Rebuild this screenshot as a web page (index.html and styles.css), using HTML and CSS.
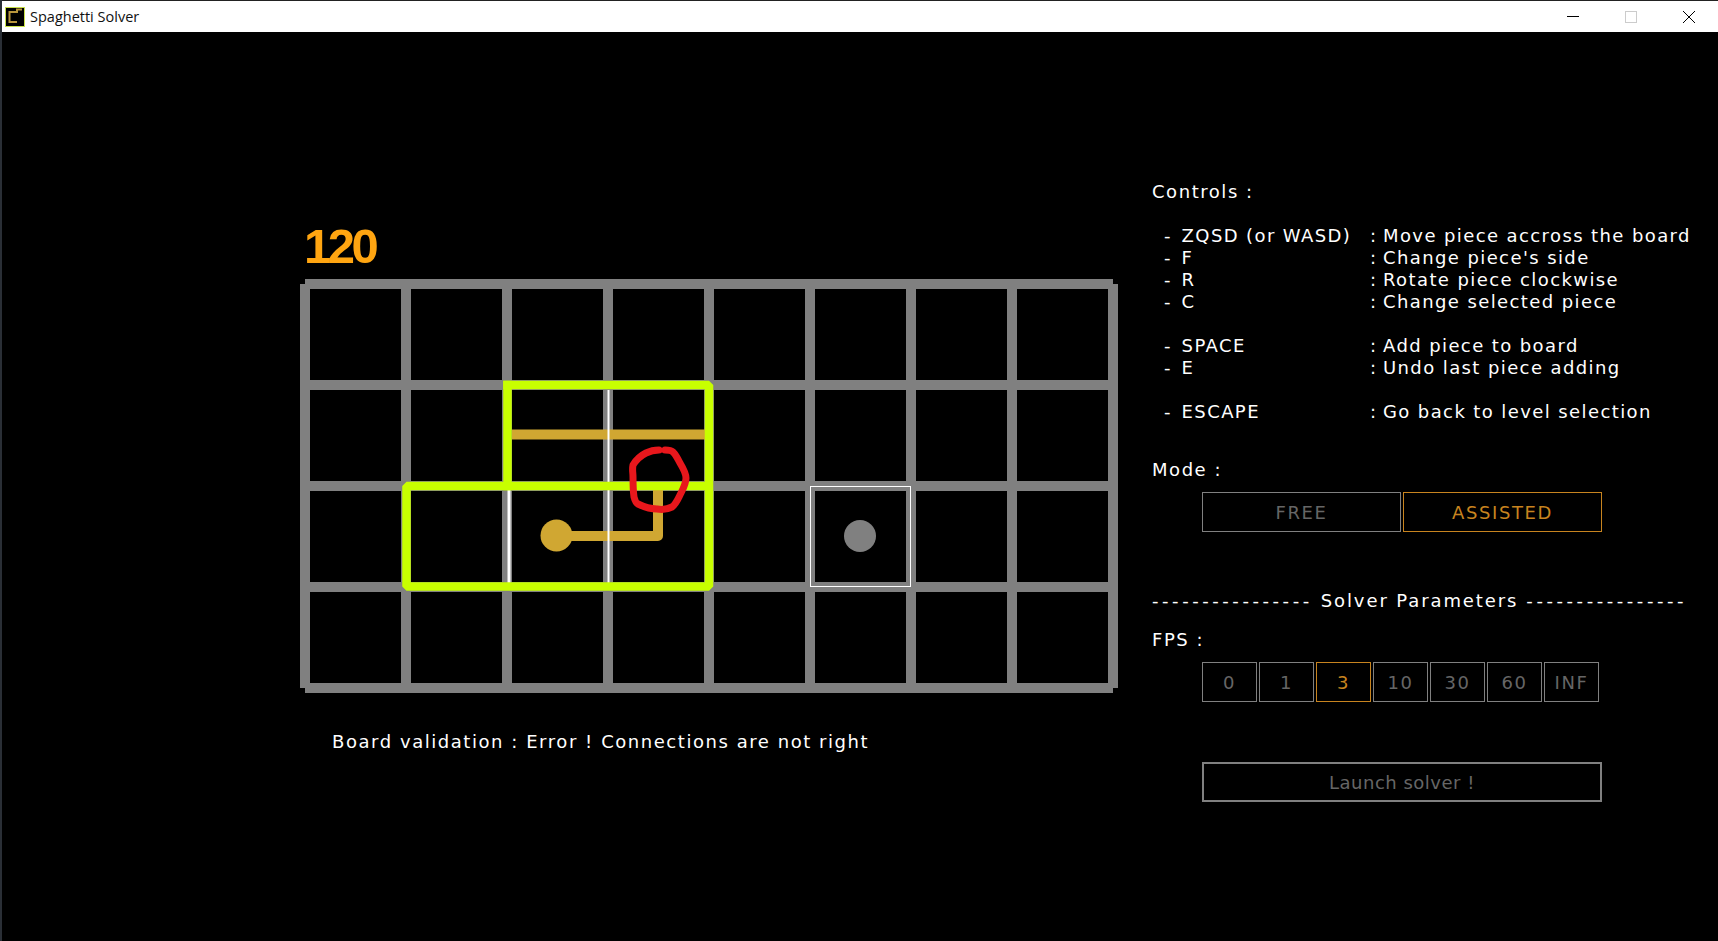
FILE: index.html
```html
<!DOCTYPE html>
<html lang="en">
<head>
    <meta charset="UTF-8">
    <meta name="viewport" content="width=device-width, initial-scale=1.0">
    <title>Spaghetti Solver</title>
    <link rel="stylesheet" href="styles.css">
</head>
<body>
    <header class="titlebar">
        <svg class="app-icon" width="20" height="20" viewBox="0 0 20 20">
            <rect x="0.5" y="0.5" width="19" height="19" fill="#000" stroke="#c8e04a"/>
            <path d="M12 15H4.5V5H12V2.5H17" fill="none" stroke="#b8963c" stroke-width="2"/>
        </svg>
        <span class="app-name">Spaghetti Solver</span>
        <div class="win-buttons">
            <svg width="12" height="12" viewBox="0 0 12 12"><path d="M0 5.5H12" stroke="#000"/></svg>
            <svg width="12" height="12" viewBox="0 0 12 12"><rect x="0.5" y="0.5" width="11" height="11" fill="none" stroke="#ccc"/></svg>
            <svg width="12" height="12" viewBox="0 0 12 12"><path d="M0 0L12 12M12 0L0 12" stroke="#000"/></svg>
        </div>
    </header>

    <main class="game">
        <section class="left">
            <div class="score">120</div>
            <svg class="board" width="818" height="414" viewBox="300 279 818 414">
                <!-- grid -->
                <path class="grid" d="M305 284H1113M305 385H1113M305 486H1113M305 587H1113M305 688H1113"/>
                <path class="grid" d="M305 284V688M406 284V688M507 284V688M608 284V688M709 284V688M810 284V688M911 284V688M1012 284V688M1113 284V688"/>
                <!-- placed piece -->
                <path class="wire" d="M512 434.5H705"/>
                <path class="wire" d="M556 536H658V490"/>
                <circle class="gold-dot" cx="556.5" cy="535.5" r="16"/>
                <path class="seam" d="M509 490V583"/>
                <path class="seam thin" d="M608.5 390V583"/>
                <!-- selection outlines -->
                <path class="outline" d="M507.5 385H709V586.5H406.5V486H709"/>
                <path class="outline" d="M507.5 385V486"/>
                <!-- current piece -->
                <rect class="cursor" x="810.5" y="486.5" width="100" height="100"/>
                <circle class="gray-dot" cx="860" cy="536" r="16"/>
                <!-- hand drawn mark -->
                <path class="mark" d="M659 450C652 450 648 452 646 453C640 456 636 460 633 465C632 470 633 472 633 477C633 484 633 490 634 497C635 501 636 503 638 504C644 507 650 509 657 509C663 510 668 509 672 507C676 504 678 499 680 495C683 489 686 484 686 478C686 473 683 468 680 463C678 459 676 455 673 452C671 450 668 450 665 450"/>
            </svg>
            <p class="validation">Board validation : Error ! Connections are not right</p>
        </section>

        <section class="panel">
            <h2 class="label">Controls :</h2>
            <ul class="controls">
                <li class="spaced"><span>-</span><span>ZQSD (or WASD)</span><span>:</span><span>Move piece accross the board</span></li>
                <li><span>-</span><span>F</span><span>:</span><span>Change piece's side</span></li>
                <li><span>-</span><span>R</span><span>:</span><span>Rotate piece clockwise</span></li>
                <li><span>-</span><span>C</span><span>:</span><span>Change selected piece</span></li>
                <li class="spaced"><span>-</span><span>SPACE</span><span>:</span><span>Add piece to board</span></li>
                <li><span>-</span><span>E</span><span>:</span><span>Undo last piece adding</span></li>
                <li class="spaced"><span>-</span><span>ESCAPE</span><span>:</span><span>Go back to level selection</span></li>
            </ul>

            <h2 class="label mode-label">Mode :</h2>
            <div class="btn-row">
                <button class="btn wide">FREE</button>
                <button class="btn wide on">ASSISTED</button>
            </div>

            <div class="divider"><span class="dashes">----------------</span><span>Solver Parameters</span><span class="dashes">----------------</span></div>

            <h2 class="label fps-label">FPS :</h2>
            <div class="btn-row">
                <button class="btn small">0</button>
                <button class="btn small">1</button>
                <button class="btn small on">3</button>
                <button class="btn small">10</button>
                <button class="btn small">30</button>
                <button class="btn small">60</button>
                <button class="btn small">INF</button>
            </div>

            <button class="btn launch">Launch solver !</button>
        </section>
    </main>
</body>
</html>
```

FILE: styles.css
```css
html, body {
    margin: 0;
    padding: 0;
    height: 100%;
}
body {
    background: #000;
    color: #fff;
    font-family: "DejaVu Sans", sans-serif;
    font-size: 18px;
    line-height: 22px;
    letter-spacing: 1.55px;
    border-left: 2px solid #2a2f36;
    box-sizing: border-box;
    overflow: hidden;
}

.titlebar {
    display: flex;
    align-items: center;
    height: 31px;
    background: #fff;
    border-top: 1px solid #222;
    color: #111;
    padding-left: 3px;
    letter-spacing: 0;
}
.app-name {
    font-family: "Open Sans", sans-serif;
    font-size: 14.5px;
    margin-left: 5px;
}
.win-buttons {
    margin-left: auto;
    display: flex;
    gap: 46px;
    padding-right: 23px;
}

.game {
    display: flex;
    padding-left: 298px;
}
.left {
    width: 818px;
    padding-top: 197px;
}
.score {
    font-family: "Liberation Sans", sans-serif;
    font-size: 49px;
    line-height: 35px;
    font-weight: bold;
    color: #ffa511;
    letter-spacing: -3.5px;
    margin: 0 0 15px 4px;
}
.board {
    display: block;
}
.grid {
    fill: none;
    stroke: #808080;
    stroke-width: 10;
}
.wire {
    fill: none;
    stroke: #d0a732;
    stroke-width: 10;
    stroke-linejoin: round;
}
.gold-dot {
    fill: #d0a732;
}
.seam {
    fill: none;
    stroke: #fff;
    stroke-width: 3;
}
.seam.thin {
    stroke-width: 2;
}
.outline {
    fill: none;
    stroke: #c8ff00;
    stroke-width: 8.5;
    stroke-linejoin: bevel;
    stroke-linecap: square;
}
.cursor {
    fill: none;
    stroke: #fff;
    stroke-width: 1;
}
.gray-dot {
    fill: #808080;
}
.mark {
    fill: none;
    stroke: #e8171c;
    stroke-width: 7;
    stroke-linecap: round;
    stroke-linejoin: round;
}
.validation {
    margin: 38px 0 0 32px;
}

.panel {
    margin-left: 34px;
    padding-top: 149px;
    width: 560px;
}
.label {
    font-size: inherit;
    font-weight: normal;
    margin: 0;
}
.mode-label {
    margin-top: 36px;
}
.fps-label {
    margin-top: 17px;
}
.controls {
    list-style: none;
    margin: 0;
    padding: 0 0 0 12px;
    letter-spacing: 1.4px;
}
.controls li {
    display: grid;
    grid-template-columns: 17.6px 188.4px 13px auto;
    white-space: nowrap;
}
.controls li.spaced {
    margin-top: 22px;
}
.btn-row {
    display: flex;
    gap: 2px;
    margin: 11px 0 0 50px;
}
.btn {
    background: #000;
    border: 1px solid #808080;
    color: #666;
    font-family: inherit;
    font-size: 18px;
    letter-spacing: 1.6px;
    height: 40px;
    padding: 0;
}
.btn.on {
    border-color: #c8841f;
    color: #c8841f;
}
.wide {
    width: 199px;
}
.small {
    width: 55px;
}
.launch {
    display: block;
    width: 400px;
    margin: 60px 0 0 50px;
    border-width: 2px;
    letter-spacing: 0.5px;
}
.divider {
    display: flex;
    gap: 8px;
    margin-top: 58px;
    white-space: nowrap;
    letter-spacing: 1.9px;
}
.dashes {
    letter-spacing: 3.55px;
}
```
